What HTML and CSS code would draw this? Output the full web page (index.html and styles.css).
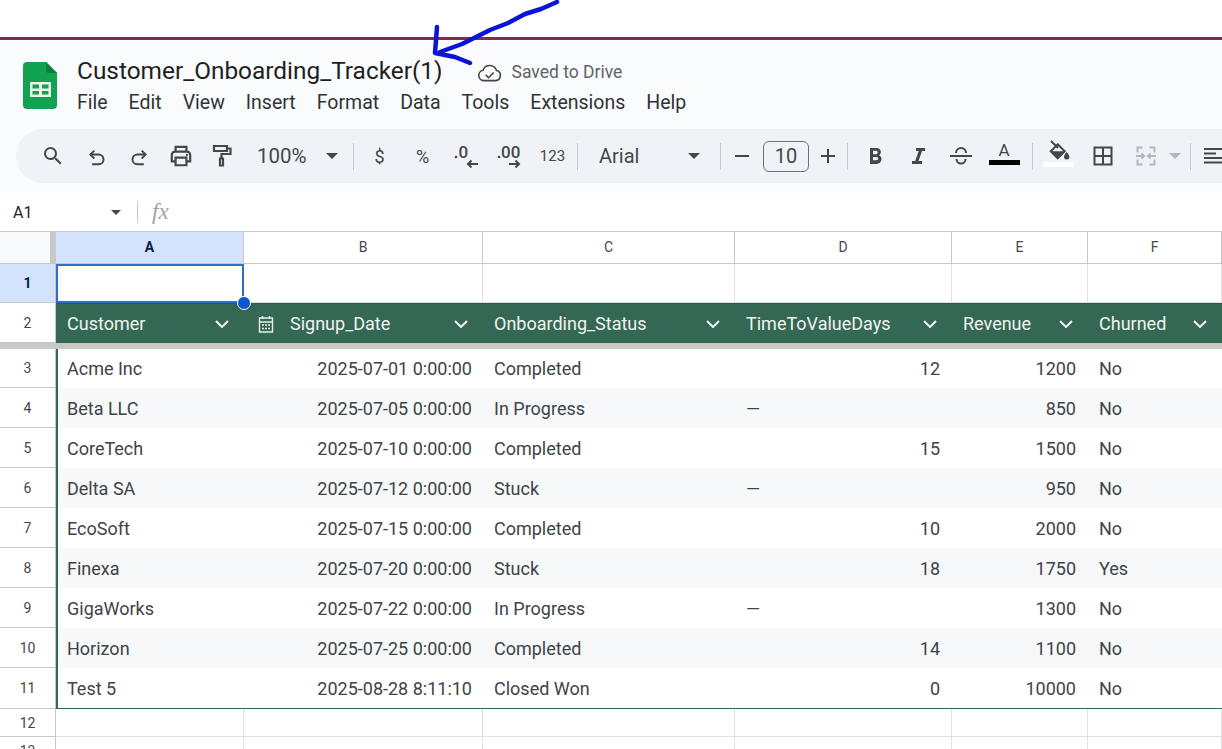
FILE: index.html
```html
<!DOCTYPE html>
<html lang="en">
<head>
    <meta charset="UTF-8">
    <meta name="viewport" content="width=device-width, initial-scale=1.0">
    <title>Customer_Onboarding_Tracker(1)</title>
    <link rel="stylesheet" href="styles.css">
</head>
<body>
    <div class="page">
        <div class="top-strip"></div>

        <header class="app-header">
            <svg class="logo" viewBox="0 0 34 47">
                <path d="M4 0H23L34 11V43a4 4 0 0 1-4 4H4a4 4 0 0 1-4-4V4a4 4 0 0 1 4-4z" fill="#11a351"/>
                <path d="M23 0L34 11H26a3 3 0 0 1-3-3z" fill="#0b7f3c"/>
                <path d="M7 20H28V35H7zM9.500 22.500V26.500H16V22.500zM19 22.500V26.500H25.500V22.500zM9.500 29V32.500H16V29zM19 29V32.500H25.500V29z" fill="#e8f5ec" fill-rule="evenodd"/>
            </svg>
            <div class="doc-info">
                <div class="title-row">
                    <span class="doc-title">Customer_Onboarding_Tracker(1)</span>
                    <svg class="cloud" viewBox="0 0 26 20" fill="none" stroke="#444746" stroke-width="1.7">
                        <path d="M7 18.500a5.500 5.500 0 0 1-.8-10.900A7.500 7.500 0 0 1 20.400 7.900 5.400 5.400 0 0 1 19.600 18.500z"/>
                        <path d="M9 12.500l3 3 5.500-5.500"/>
                    </svg>
                    <span class="saved">Saved to Drive</span>
                </div>
                <nav class="menu">
                    <span>File</span><span>Edit</span><span>View</span><span>Insert</span><span>Format</span><span>Data</span><span>Tools</span><span>Extensions</span><span>Help</span>
                </nav>
            </div>
        </header>

        <div class="toolbar-wrap">
            <div class="toolbar">
                <div class="tb-btn w43">
                    <svg viewBox="0 0 24 24" class="ic"><path fill="#444746" d="M15.500 14h-.79l-.28-.27A6.470 6.470 0 0 0 16 9.500 6.500 6.500 0 1 0 9.500 16c1.610 0 3.090-.59 4.230-1.570l.27.28v.79l5 4.990L20.490 19l-4.990-5zm-6 0C7.010 14 5 11.990 5 9.500S7.010 5 9.500 5 14 7.010 14 9.500 11.990 14 9.500 14z"/></svg>
                </div>
                <div class="tb-btn w44">
                    <svg viewBox="0 0 24 24" class="ic-low" fill="none" stroke="#444746" stroke-width="2.200"><path d="M9.500 3L5 7.500 9.500 12"/><path d="M5 7.500h9.500a5.500 5.500 0 0 1 0 11H7"/></svg>
                </div>
                <div class="tb-btn w42">
                    <svg viewBox="0 0 24 24" class="ic-low" fill="none" stroke="#444746" stroke-width="2.200"><path d="M14.500 3L19 7.500 14.500 12"/><path d="M19 7.500H9.500a5.500 5.500 0 0 0 0 11H17"/></svg>
                </div>
                <div class="tb-btn w42">
                    <svg viewBox="0 0 24 24" class="ic-big" fill="none" stroke="#444746" stroke-width="2"><path d="M7 8V3.500h10V8"/><path d="M7 17H3.500v-6a3 3 0 0 1 3-3h11a3 3 0 0 1 3 3v6H17"/><path d="M7 13.500h10v7H7z"/><circle cx="17.500" cy="11" r="1" fill="#444746" stroke="none"/></svg>
                </div>
                <div class="tb-btn w40">
                    <svg viewBox="0 0 24 24" class="ic" fill="none" stroke="#444746" stroke-width="2.200"><path d="M4 2h13v5H4z"/><path d="M17 4.500h3.500v5.500H11.500v4"/><path d="M10 14.500h3V21.500H10z"/></svg>
                </div>
                <div class="tb-zoom">100%</div>
                <span class="caret zoom-caret"></span>
                <span class="sep zoom-sep"></span>
                <div class="tb-btn w43 tb-text">$</div>
                <div class="tb-btn w43 tb-text">%</div>
                <div class="tb-btn w43">
                    <svg viewBox="0 -4 28 28" class="ic-wide" fill="#444746">
                        <circle cx="4" cy="13" r="1.300"/>
                        <text x="6.500" y="14" class="dec-text">0</text>
                        <path d="M26 20H16M19.500 16.500L16 20l3.500 3.500" fill="none" stroke="#444746" stroke-width="2"/>
                    </svg>
                </div>
                <div class="tb-btn w44">
                    <svg viewBox="0 -4 28 28" class="ic-wide" fill="#444746">
                        <circle cx="4" cy="13" r="1.300"/>
                        <text x="6" y="14" class="dec-text">00</text>
                        <path d="M14 20H24M20.500 16.500L24 20l-3.500 3.500" fill="none" stroke="#444746" stroke-width="2"/>
                    </svg>
                </div>
                <div class="tb-btn w43 tb-123">123</div>
                <span class="sep num-sep"></span>
                <div class="tb-font">Arial</div>
                <span class="caret font-caret"></span>
                <span class="sep font-sep"></span>
                <div class="tb-btn w42">
                    <svg viewBox="0 0 24 24" class="ic" fill="#444746"><path d="M5 11h14v2H5z"/></svg>
                </div>
                <div class="size-box">10</div>
                <div class="tb-btn w38">
                    <svg viewBox="0 0 24 24" class="ic" fill="#444746"><path d="M5 11h6V5h2v6h6v2h-6v6h-2v-6H5z"/></svg>
                </div>
                <span class="sep size-sep"></span>
                <div class="tb-btn w42">
                    <svg viewBox="0 0 24 24" class="ic" fill="#444746"><path fill-rule="evenodd" d="M7 4h6.200c2.700 0 4.600 1.600 4.600 4 0 1.400-.7 2.600-1.900 3.300 1.600.6 2.600 2 2.600 3.800 0 2.900-2.100 4.900-5.200 4.900H7zm3 2.800v3.500h2.800c1.100 0 1.900-.7 1.900-1.800s-.8-1.700-1.900-1.700zm0 6.100v3.300h3.200c1.200 0 2-.7 2-1.700s-.8-1.600-2-1.600z"/></svg>
                </div>
                <div class="tb-btn w43">
                    <svg viewBox="0 0 24 24" class="ic" fill="#444746"><path d="M10 4h9v3h-3l-3.500 10H16v3H6v-3h3.200L12.700 7H10z"/></svg>
                </div>
                <div class="tb-btn w43">
                    <svg viewBox="0 0 24 24" class="ic" fill="none" stroke="#444746" stroke-width="2"><path d="M1 12h22"/><path d="M7 9a5 5 0 0 1 10 0"/><path d="M7.500 15a4.500 4.500 0 0 0 9 0"/></svg>
                </div>
                <div class="tb-btn w44 text-color">
                    <span class="text-color-a">A</span>
                    <span class="text-color-bar"></span>
                </div>
                <span class="sep color-sep"></span>
                <div class="tb-btn w45 fill-color">
                    <svg viewBox="0 0 24 24" class="ic" fill="#444746">
                        <path d="M4 2l7 7" fill="none" stroke="#444746" stroke-width="2"/>
                        <path d="M10.700 5.300l7 7-7 7-7-7z" fill="none" stroke="#444746" stroke-width="2"/>
                        <path d="M3.700 12.300h14l-7 7z"/>
                        <path d="M19.700 13s2.700 2.800 2.700 4.700a2.700 2.700 0 0 1-5.400 0c0-1.900 2.700-4.700 2.700-4.700z"/>
                    </svg>
                    <span class="fill-bar"></span>
                </div>
                <div class="tb-btn w43">
                    <svg viewBox="0 0 24 24" class="ic" fill="none" stroke="#444746" stroke-width="2"><path d="M3.500 3.500h17v17h-17zM12 3.500v17M3.500 12h17"/></svg>
                </div>
                <div class="tb-btn w44">
                    <svg viewBox="0 0 24 24" class="ic" fill="none" stroke="#b4b7bb" stroke-width="2"><path d="M8.500 3.500h-5v5M3.500 15.500v5h5M15.500 3.500h5v5M20.500 15.500v5h-5M2 12h8M7.500 9.500l2.500 2.500-2.500 2.500M22 12h-8M16.500 9.500L14 12l2.500 2.500"/></svg>
                </div>
                <span class="caret merge-caret"></span>
                <span class="sep merge-sep"></span>
                <div class="tb-btn w44">
                    <svg viewBox="0 0 24 24" class="ic" fill="#444746"><path d="M3 4h18v2H3zM3 8.500h12v2H3zM3 13h18v2H3zM3 17.500h18v2H3z"/></svg>
                </div>
            </div>
        </div>

        <div class="formula-bar">
            <div class="name-box">A1</div>
            <span class="caret name-caret"></span>
            <span class="sep fx-sep"></span>
            <span class="fx">fx</span>
        </div>

        <div class="sheet">
            <div class="corner"></div>
            <div class="col-head active">A</div>
            <div class="col-head">B</div>
            <div class="col-head">C</div>
            <div class="col-head">D</div>
            <div class="col-head">E</div>
            <div class="col-head">F</div>

            <div class="row-head active">1</div>
            <div class="cell grid selected"><span class="handle"></span></div>
            <div class="cell grid"></div>
            <div class="cell grid"></div>
            <div class="cell grid"></div>
            <div class="cell grid"></div>
            <div class="cell grid"></div>

            <div class="row-head">2</div>
            <div class="thead"><span>Customer</span><svg class="chev" viewBox="0 0 14 8"><path d="M1 1l6 6 6-6"/></svg></div>
            <div class="thead date-head">
                <svg class="cal" viewBox="0 0 16 18" fill="none" stroke="#e8f0ec" stroke-width="1.400"><path d="M1.500 3h13v14h-13zM1.500 7h13M4.500 1v3M11.500 1v3"/><path d="M4 10h2M7 10h2M10 10h2M4 13.500h2M7 13.500h2M10 13.500h2"/></svg>
                <span>Signup_Date</span><svg class="chev" viewBox="0 0 14 8"><path d="M1 1l6 6 6-6"/></svg>
            </div>
            <div class="thead"><span>Onboarding_Status</span><svg class="chev" viewBox="0 0 14 8"><path d="M1 1l6 6 6-6"/></svg></div>
            <div class="thead"><span>TimeToValueDays</span><svg class="chev" viewBox="0 0 14 8"><path d="M1 1l6 6 6-6"/></svg></div>
            <div class="thead"><span>Revenue</span><svg class="chev" viewBox="0 0 14 8"><path d="M1 1l6 6 6-6"/></svg></div>
            <div class="thead"><span>Churned</span><svg class="chev" viewBox="0 0 14 8"><path d="M1 1l6 6 6-6"/></svg></div>

            <div class="freeze"></div>

            <div class="row-head">3</div>
            <div class="cell first">Acme Inc</div><div class="cell date">2025-07-01 0:00:00</div><div class="cell">Completed</div><div class="cell num">12</div><div class="cell num">1200</div><div class="cell">No</div>

            <div class="row-head">4</div>
            <div class="cell first band">Beta LLC</div><div class="cell date band">2025-07-05 0:00:00</div><div class="cell band">In Progress</div><div class="cell band">—</div><div class="cell num band">850</div><div class="cell band">No</div>

            <div class="row-head">5</div>
            <div class="cell first">CoreTech</div><div class="cell date">2025-07-10 0:00:00</div><div class="cell">Completed</div><div class="cell num">15</div><div class="cell num">1500</div><div class="cell">No</div>

            <div class="row-head">6</div>
            <div class="cell first band">Delta SA</div><div class="cell date band">2025-07-12 0:00:00</div><div class="cell band">Stuck</div><div class="cell band">—</div><div class="cell num band">950</div><div class="cell band">No</div>

            <div class="row-head">7</div>
            <div class="cell first">EcoSoft</div><div class="cell date">2025-07-15 0:00:00</div><div class="cell">Completed</div><div class="cell num">10</div><div class="cell num">2000</div><div class="cell">No</div>

            <div class="row-head">8</div>
            <div class="cell first band">Finexa</div><div class="cell date band">2025-07-20 0:00:00</div><div class="cell band">Stuck</div><div class="cell num band">18</div><div class="cell num band">1750</div><div class="cell band">Yes</div>

            <div class="row-head">9</div>
            <div class="cell first">GigaWorks</div><div class="cell date">2025-07-22 0:00:00</div><div class="cell">In Progress</div><div class="cell">—</div><div class="cell num">1300</div><div class="cell">No</div>

            <div class="row-head">10</div>
            <div class="cell first band">Horizon</div><div class="cell date band">2025-07-25 0:00:00</div><div class="cell band">Completed</div><div class="cell num band">14</div><div class="cell num band">1100</div><div class="cell band">No</div>

            <div class="row-head">11</div>
            <div class="cell first last">Test 5</div><div class="cell date last">2025-08-28 8:11:10</div><div class="cell last">Closed Won</div><div class="cell num last">0</div><div class="cell num last">10000</div><div class="cell last">No</div>

            <div class="row-head">12</div>
            <div class="cell grid"></div><div class="cell grid"></div><div class="cell grid"></div><div class="cell grid"></div><div class="cell grid"></div><div class="cell grid"></div>

            <div class="row-head">13</div>
            <div class="cell grid"></div><div class="cell grid"></div><div class="cell grid"></div><div class="cell grid"></div><div class="cell grid"></div><div class="cell grid"></div>
        </div>

        <!-- hand drawn arrow on top of the screenshot -->
        <svg class="scribble" viewBox="0 0 1222 749" fill="none" stroke="#0a14d6" stroke-width="4.500" stroke-linecap="round" stroke-linejoin="round">
            <path d="M557 2L541 9 525 14 508 23 490 30 476 37 462 44 440 52"/>
            <path d="M437 27L436 40 435 53 455 57 470 63"/>
        </svg>
    </div>
</body>
</html>
```

FILE: styles.css
```css
body {
    margin: 0;
    font-family: Roboto, "Liberation Sans", sans-serif;
    background-color: #fff;
    color: #3c4043;
}

.page {
    position: relative;
    width: 1222px;
    height: 749px;
    overflow: hidden;
}

.top-strip {
    height: 37px;
    border-bottom: 3px solid #8e2453;
    box-shadow: 0 1px 0 #c9a0b4;
}

/* title + menus */
.app-header {
    display: flex;
    height: 89px;
    padding-left: 23px;
    background-color: #f9fbfd;
}

.logo {
    width: 34px;
    height: 47px;
    margin-top: 22px;
}

.doc-info {
    margin-left: 20px;
    padding-top: 14px;
}

.title-row {
    display: flex;
    align-items: center;
    height: 32px;
}

.doc-title {
    font-size: 24.4px;
    color: #1f1f1f;
}

.cloud {
    width: 25px;
    height: 19px;
    margin-left: 34px;
    margin-top: 5px;
}

.saved {
    margin-left: 10px;
    margin-top: 4px;
    font-size: 17.5px;
    color: #5f6368;
}

.menu {
    display: flex;
    gap: 21px;
    margin-top: 5px;
    font-size: 19.5px;
    color: #303336;
}

/* toolbar */
.toolbar-wrap {
    height: 64px;
    padding-left: 16px;
    background-color: #f9fbfd;
    overflow: hidden;
}

.toolbar {
    display: flex;
    align-items: center;
    width: 1300px;
    height: 54px;
    padding-left: 15px;
    border-radius: 27px 0 0 27px;
    background-color: #eff3f8;
}

.tb-btn {
    position: relative;
    display: flex;
    flex: none;
    align-items: center;
    justify-content: center;
    height: 40px;
}

.w38 { width: 38px; }
.w40 { width: 40px; }
.w42 { width: 42px; }
.w43 { width: 43px; }
.w44 { width: 44px; }
.w45 { width: 45px; }

.ic {
    width: 24px;
    height: 24px;
}

.ic-big {
    width: 26px;
    height: 26px;
}

.ic-low {
    width: 21px;
    height: 21px;
    margin-top: 4px;
}

.ic-wide {
    width: 28px;
    height: 28px;
    margin-top: -4px;
}

.dec-text {
    font-size: 17px;
    font-weight: 500;
}

.tb-text {
    font-size: 18px;
    color: #444746;
}

.tb-123 {
    font-size: 15px;
    color: #444746;
}

.tb-zoom {
    flex: none;
    width: 69px;
    padding-left: 15px;
    font-size: 20.5px;
    color: #444746;
}

.tb-font {
    flex: none;
    width: 87px;
    padding-left: 21px;
    font-size: 20px;
    color: #444746;
}

.caret {
    flex: none;
    width: 0;
    height: 0;
    border-left: 6px solid transparent;
    border-right: 6px solid transparent;
    border-top: 6px solid #444746;
}

.font-caret { margin-left: 2px; }
.merge-caret {
    margin-left: 1px;
    border-top-color: #b4b7bb;
}

.sep {
    flex: none;
    width: 1px;
    height: 27px;
    background-color: #c7c9cc;
}

.zoom-sep { margin: 0 4px 0 15px; }
.num-sep { margin-left: 3px; }
.font-sep { margin-left: 20px; }
.size-sep { margin-right: 6px; }
.color-sep { margin: 0 3px 0 6px; }
.merge-sep { margin-left: 9px; }

.size-box {
    flex: none;
    box-sizing: border-box;
    width: 46px;
    height: 31px;
    border: 1px solid #6f7275;
    border-radius: 6px;
    font-size: 20px;
    line-height: 29px;
    text-align: center;
    color: #444746;
}

.text-color {
    flex-direction: column;
    justify-content: flex-start;
    padding-top: 8px;
}

.text-color-a {
    font-size: 17px;
    line-height: 20px;
    color: #444746;
}

.text-color-bar {
    width: 31px;
    height: 5px;
    background-color: #000;
}

.fill-color {
    flex-direction: column;
    justify-content: flex-start;
    padding-top: 5px;
}

.fill-bar {
    width: 31px;
    height: 5px;
    margin-top: -1px;
    background-color: #fff;
}

/* formula bar */
.formula-bar {
    display: flex;
    align-items: center;
    height: 38px;
    background-color: #fff;
}

.name-box {
    width: 98px;
    padding-left: 13px;
    font-size: 16px;
    color: #1f1f1f;
}

.name-caret {
    border-left-width: 5px;
    border-right-width: 5px;
    border-top-width: 5px;
}

.fx-sep {
    height: 22px;
    margin-left: 16px;
}

.fx {
    margin-left: 14px;
    font-family: "Liberation Serif", serif;
    font-style: italic;
    font-size: 23px;
    color: #a0a3a6;
}

/* the grid itself */
.sheet {
    display: grid;
    grid-template-columns: 56px 188px 239px 252px 217px 136px 134px;
    grid-template-rows: 32px 39px 40px 6px 39px repeat(7, 40px) 41px 28px 28px;
    border-top: 1px solid #c7c7c7;
}

.sheet > div {
    box-sizing: border-box;
}

.corner {
    border-right: 6px solid #c7c7c7;
    border-bottom: 1px solid #c7c7c7;
    background-color: #f8f9fa;
}

.col-head {
    border-right: 1px solid #c7c7c7;
    border-bottom: 1px solid #c7c7c7;
    font-size: 14px;
    line-height: 31px;
    text-align: center;
    color: #444746;
}

.col-head.active {
    font-weight: 700;
    color: #041e49;
    background-color: #d3e3fd;
}

.row-head {
    border-right: 1px solid #c7c7c7;
    border-bottom: 1px solid #c7c7c7;
    display: flex;
    align-items: center;
    justify-content: center;
    font-size: 14px;
    color: #444746;
}

.row-head.active {
    font-weight: 700;
    color: #041e49;
    background-color: #d3e3fd;
}

.freeze {
    grid-column: 1 / -1;
    background-color: #c8c8c6;
}

.cell {
    display: flex;
    align-items: center;
    padding: 0 11px;
    font-size: 18px;
    color: #404346;
}

.cell.date {
    justify-content: flex-end;
}

.cell.num {
    justify-content: flex-end;
    padding-right: 12px;
}

.cell.band {
    background-color: #f6f8f9;
}

.cell.first {
    padding-left: 9px;
    border-left: 2px solid #356854;
}

.cell.last {
    border-bottom: 1px solid #356854;
}

.cell.grid {
    border-right: 1px solid #e1e1e1;
    border-bottom: 1px solid #e1e1e1;
}

.cell.selected {
    position: relative;
    border: 2px solid #2f6fc9;
}

.handle {
    position: absolute;
    right: -9px;
    bottom: -9px;
    z-index: 2;
    box-sizing: border-box;
    width: 14px;
    height: 14px;
    border: 1px solid #fff;
    border-radius: 50%;
    background-color: #0b57d0;
}

.thead {
    display: flex;
    align-items: center;
    justify-content: space-between;
    padding: 0 15px 0 11px;
    font-size: 18px;
    color: #eef4f0;
    background-color: #356854;
    border-top: 1px solid #2e5a49;
}

.date-head {
    justify-content: flex-start;
    padding-left: 14px;
}

.date-head .chev {
    margin-left: auto;
}

.cal {
    width: 16px;
    height: 18px;
    margin-right: 16px;
}

.chev {
    width: 14px;
    height: 8px;
    fill: none;
    stroke: #eef4f0;
    stroke-width: 2;
}

.scribble {
    position: absolute;
    top: 0;
    left: 0;
    width: 1222px;
    height: 749px;
    pointer-events: none;
}
```
